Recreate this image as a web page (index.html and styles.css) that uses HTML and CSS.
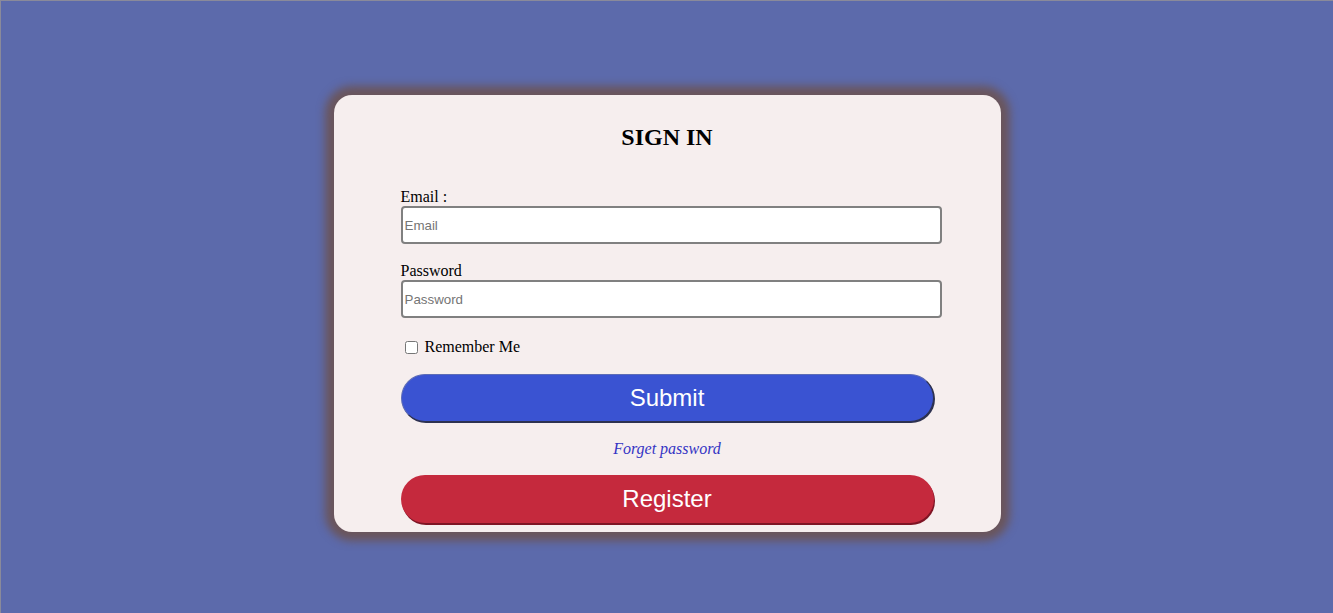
FILE: index.html
```html
<!DOCTYPE html>
<html lang="en">
<head>
<meta charset="utf-8">
<title>Sign In</title>
<link rel="stylesheet" href="styles.css">
</head>
<body>
<main class="page">
  <form class="card">
    <h2 class="title">SIGN IN</h2>
    <label class="label" for="email">Email :</label>
    <input class="field" id="email" type="text" placeholder="Email">
    <label class="label label-pass" for="password">Password</label>
    <input class="field" id="password" type="password" placeholder="Password">
    <div class="remember"><input class="check" type="checkbox" id="remember"><label for="remember">Remember Me</label></div>
    <button type="button" class="btn btn-submit">Submit</button>
    <a class="forget" href="#">Forget password</a>
    <button type="button" class="btn btn-register">Register</button>
  </form>
</main>
</body>
</html>
```

FILE: styles.css
```css
html, body {
  margin: 0;
  padding: 0;
  height: 100%;
}
body {
  background: #5c6aab;
  font-family: "Liberation Serif", "Times New Roman", serif;
  font-size: 16px;
  color: #000;
  box-sizing: border-box;
  border-top: 1px solid #8a8a9a;
  border-left: 1px solid #8a8a9a;
}
.page {
  padding-top: 94px;
  display: flex;
  justify-content: center;
}
.card {
  box-sizing: border-box;
  width: 667px;
  height: 437px;
  background: #f6eeee;
  border-radius: 18px;
  box-shadow: 0 0 8px 9px #6a555c;
  padding: 0 67px;
  display: flex;
  flex-direction: column;
  align-items: stretch;
}
.card > * {
  flex-shrink: 0;
}
.title {
  margin: 28px 0 0;
  font-size: 24px;
  font-weight: bold;
  line-height: 28px;
  text-align: center;
}
.label {
  display: block;
  line-height: 18px;
  margin-top: 37px;
}
.label-pass {
  margin-top: 18px;
}
.field {
  box-sizing: border-box;
  width: 541px;
  height: 38px;
  margin: 0;
  padding: 0 2px;
  border: 2px solid #808080;
  border-radius: 4px;
  background: #fff;
  font-family: "Liberation Sans", Arial, sans-serif;
  font-size: 13.33px;
  color: #000;
  outline: none;
}
.field::placeholder {
  color: #757575;
}
.remember {
  margin-top: 19px;
  height: 20px;
  display: flex;
  align-items: center;
  gap: 7px;
}
.check {
  width: 13px;
  height: 13px;
  margin: 0 0 0 4px;
}
.btn {
  box-sizing: border-box;
  height: 48px;
  width: 533px;
  border-radius: 24px;
  color: #fff;
  font-family: "Liberation Sans", Arial, sans-serif;
  font-size: 24px;
  padding: 0;
  cursor: pointer;
}
.btn-submit {
  margin-top: 17px;
  background: #3a53d2;
  border: 1px solid #2d3150;
  border-top-color: #5d6cb6;
  border-left-color: #5d6cb6;
  box-shadow: 1px 1px 0 #2d3150;
}
.forget {
  margin-top: 18px;
  align-self: center;
  line-height: 18px;
  font-style: italic;
  color: #3434c4;
  text-decoration: none;
}
.btn-register {
  margin-top: 17px;
  background: #c5293d;
  border: none;
  box-shadow: 1px 2px 0 #7e1424;
}
```
